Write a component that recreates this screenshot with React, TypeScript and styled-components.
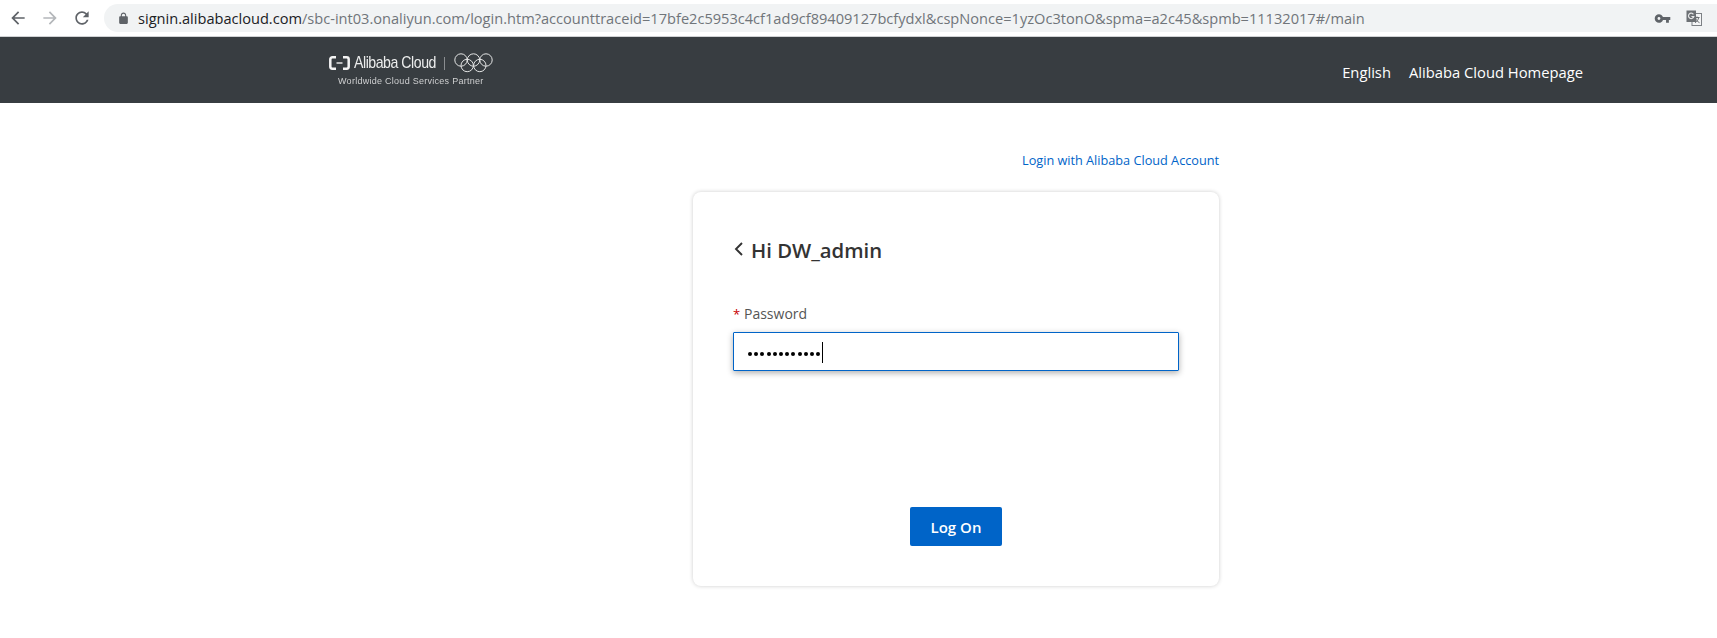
import React from "react";
import styled, { createGlobalStyle } from "styled-components";

const Global = createGlobalStyle`
  html, body { margin: 0; padding: 0; background: #fff; }
  body { font-family: "Open Sans", "Noto Sans", sans-serif; overflow: hidden; }
`;

const Page = styled.div`
  width: 1717px;
  height: 638px;
  display: flex;
  flex-direction: column;
`;

/* Browser chrome */
const BrowserBar = styled.div`
  height: 36px;
  border-bottom: 1px solid #d0d2d4;
  box-sizing: content-box;
  display: flex;
  align-items: flex-start;
  padding-top: 0;
  background: #fff;
`;
const NavButtons = styled.div`
  width: 104px;
  height: 36px;
  flex: none;
  display: flex;
  align-items: center;
  gap: 12px;
  padding-left: 8px;
  box-sizing: border-box;
`;
const NavIcon = styled.svg<{ $off?: boolean }>`
  width: 20px;
  height: 20px;
  fill: ${(p) => (p.$off ? "#b4b7ba" : "#5f6368")};
  flex: none;
`;
const UrlPill = styled.div`
  flex: 1;
  height: 28px;
  margin-top: 4px;
  background: #f1f3f4;
  border-radius: 14px 0 0 14px;
  display: flex;
  align-items: center;
  padding-left: 13px;
  box-sizing: border-box;
`;
const LockIcon = styled.svg`
  width: 13px;
  height: 13px;
  fill: #5f6368;
  flex: none;
  margin-right: 8px;
`;
const UrlText = styled.div`
  font-family: "Open Sans", sans-serif;
  font-size: 14.6px;
  color: #70757a;
  white-space: nowrap;
  flex: 1;
  strong { font-weight: 400; color: #202124; }
`;
const PillIcons = styled.div`
  display: flex;
  align-items: center;
  gap: 15px;
  padding-right: 15px;
`;
const KeyIcon = styled.svg`
  width: 17px;
  height: 17px;
  fill: #5f6368;
`;
const TranslateIcon = styled.svg`
  width: 16px;
  height: 16px;
`;

/* Site header */
const SiteHeader = styled.header`
  height: 66px;
  background: #383d41;
  display: flex;
  align-items: center;
  justify-content: space-between;
  padding: 0 134px 0 329px;
  flex: none;
`;
const Brand = styled.div`
  display: flex;
  flex-direction: column;
  align-items: flex-start;
  margin-top: -1px;
`;
const BrandRow = styled.div`
  display: flex;
  align-items: center;
  color: #eceded;
`;
const BrandName = styled.span`
  font-family: "Liberation Sans", sans-serif;
  font-size: 17px;
  letter-spacing: -0.55px;
  margin-left: 4px;
  white-space: nowrap;
  transform: scaleX(0.83);
  transform-origin: left center;
  width: 90px;
  filter: blur(0.3px);
`;
const BrandBar = styled.span`
  width: 1px;
  height: 13px;
  background: #8a8d90;
  margin: 0 9px 0 0;
`;
const BrandTag = styled.span`
  font-family: "Liberation Sans", sans-serif;
  font-size: 9px;
  letter-spacing: 0.27px;
  color: #cfd0d1;
  margin: 3px 0 0 9px;
  white-space: nowrap;
  filter: blur(0.25px);
`;
const HeaderNav = styled.nav`
  display: flex;
  gap: 18px;
  margin-top: 3px;
`;
const HeaderLink = styled.a`
  font-size: 14.75px;
  color: #fff;
  white-space: nowrap;
`;

/* Login */
const Main = styled.main`
  width: 526px;
  margin-left: 693px;
  padding-top: 47px;
  display: flex;
  flex-direction: column;
`;
const AccountLink = styled.a`
  align-self: flex-end;
  font-size: 12.7px;
  line-height: 20px;
  color: #0064c8;
  white-space: nowrap;
`;
const Card = styled.section`
  margin-top: 22px;
  height: 394px;
  box-sizing: border-box;
  background: #fff;
  border-radius: 8px;
  box-shadow: 0 0 4px rgba(0, 0, 0, 0.2);
  padding: 43px 40px 40px;
  display: flex;
  flex-direction: column;
`;
const Title = styled.h1`
  margin: 0;
  display: flex;
  align-items: center;
  font-size: 20.3px;
  line-height: 30px;
  font-weight: 600;
  color: #333;
  gap: 7px;
`;
const BackIcon = styled.svg`
  width: 10px;
  height: 14px;
  margin-left: 1px;
  fill: none;
  stroke: #333;
  stroke-width: 1.9;
  margin-top: -2px;
`;
const FieldLabel = styled.label`
  margin-top: 39px;
  font-size: 14px;
  line-height: 20px;
  color: #555;
  display: flex;
  gap: 3px;
`;
const Required = styled.span`
  color: #c80000;
  width: 8px;
  font-size: 13px;
`;
const PasswordBox = styled.div`
  margin-top: 8px;
  width: 446px;
  height: 39px;
  box-sizing: border-box;
  border: 1px solid #0064c8;
  border-radius: 1px;
  box-shadow: 0 2px 6px rgba(0, 0, 0, 0.32);
  display: flex;
  align-items: center;
  padding-left: 14px;
`;
const Dots = styled.span`
  display: flex;
  gap: 2.2px;
  margin-top: 4px;
`;
const Dot = styled.i`
  width: 4px;
  height: 4px;
  border-radius: 50%;
  background: #000;
`;
const Caret = styled.span`
  width: 1px;
  height: 21px;
  background: #000;
  margin-left: 2px;
  margin-top: 1px;
`;
const Actions = styled.div`
  margin-top: auto;
  display: flex;
  justify-content: center;
`;
const LogOn = styled.button`
  width: 92px;
  height: 39px;
  border: none;
  border-radius: 2px;
  background: #0064c8;
  color: #fff;
  font-family: inherit;
  font-size: 15px;
  font-weight: 600;
  padding: 1px 0 0;
`;

export default function App() {
  return (
    <Page>
      <Global />
      <BrowserBar>
        <NavButtons>
          <NavIcon viewBox="0 0 24 24"><path d="M20 11H7.83l5.59-5.59L12 4l-8 8 8 8 1.41-1.41L7.83 13H20v-2z" /></NavIcon>
          <NavIcon $off viewBox="0 0 24 24"><path d="M4 11h12.17l-5.59-5.59L12 4l8 8-8 8-1.41-1.41L16.17 13H4v-2z" /></NavIcon>
          <NavIcon viewBox="0 0 24 24"><path d="M17.65 6.35C16.2 4.9 14.21 4 12 4c-4.42 0-7.99 3.58-7.99 8s3.57 8 7.99 8c3.73 0 6.84-2.55 7.73-6h-2.08c-.82 2.33-3.04 4-5.65 4-3.31 0-6-2.69-6-6s2.69-6 6-6c1.66 0 3.14.69 4.22 1.78L13 11h7V4l-2.35 2.35z" /></NavIcon>
        </NavButtons>
        <UrlPill>
          <LockIcon viewBox="0 0 24 24"><path d="M18 8h-1V6c0-2.76-2.24-5-5-5S7 3.24 7 6v2H6c-1.1 0-2 .9-2 2v10c0 1.1.9 2 2 2h12c1.1 0 2-.9 2-2V10c0-1.1-.9-2-2-2zM9 6c0-1.66 1.34-3 3-3s3 1.34 3 3v2H9V6z" /></LockIcon>
          <UrlText><strong>signin.alibabacloud.com</strong>/sbc-int03.onaliyun.com/login.htm?accounttraceid=17bfe2c5953c4cf1ad9cf89409127bcfydxl&amp;cspNonce=1yzOc3tonO&amp;spma=a2c45&amp;spmb=11132017#/main</UrlText>
          <PillIcons>
            <KeyIcon viewBox="0 0 24 24"><path d="M12.65 10C11.83 7.67 9.61 6 7 6c-3.31 0-6 2.69-6 6s2.69 6 6 6c2.61 0 4.83-1.67 5.65-4H17v4h4v-4h2v-4H12.65zM7 14c-1.1 0-2-.9-2-2s.9-2 2-2 2 .9 2 2-.9 2-2 2z" /></KeyIcon>
            <TranslateIcon viewBox="0 0 16 16">
              <rect x="6" y="3.5" width="9.5" height="12" fill="#f4f5f6" stroke="#7d8185" />
              <path d="M8.5 7.5h5M11 6.5v1M9.5 7.5c.6 2.5 2 4.4 4 5.2M12.7 7.5c-.5 2.5-1.8 4.3-3.7 5.2" fill="none" stroke="#6a6e72" strokeWidth="1" />
              <rect x="0.5" y="0.5" width="9.5" height="11.5" fill="#6c7074" />
              <path d="M7.4 4.3A2.7 2.7 0 1 0 7.8 6.5H5.4" fill="none" stroke="#e6e7e8" strokeWidth="1.2" />
            </TranslateIcon>
          </PillIcons>
        </UrlPill>
      </BrowserBar>
      <SiteHeader>
        <Brand>
          <BrandRow>
            <svg width="21" height="14" viewBox="0 0 21 14" fill="none" stroke="#f4f4f4" strokeWidth="2.5">
              <path d="M7 1.3H3.4a2.1 2.1 0 0 0-2.1 2.1v7.2a2.1 2.1 0 0 0 2.1 2.1H7" />
              <path d="M14 1.3h3.6a2.1 2.1 0 0 1 2.1 2.1v7.2a2.1 2.1 0 0 1-2.1 2.1H14" />
              <path d="M7.5 7h6" strokeWidth="1.4" />
            </svg>
            <BrandName>Alibaba Cloud</BrandName>
            <BrandBar />
            <svg width="39" height="20" viewBox="0 0 39 20" fill="none" stroke="#e4e5e5" strokeWidth="1">
              <circle cx="7" cy="7" r="6.2" />
              <circle cx="19.5" cy="7" r="6.2" />
              <circle cx="32" cy="7" r="6.2" />
              <circle cx="13.2" cy="12.5" r="6.2" />
              <circle cx="25.8" cy="12.5" r="6.2" />
            </svg>
          </BrandRow>
          <BrandTag>Worldwide Cloud Services Partner</BrandTag>
        </Brand>
        <HeaderNav>
          <HeaderLink>English</HeaderLink>
          <HeaderLink>Alibaba Cloud Homepage</HeaderLink>
        </HeaderNav>
      </SiteHeader>
      <Main>
        <AccountLink>Login with Alibaba Cloud Account</AccountLink>
        <Card>
          <Title>
            <BackIcon viewBox="0 0 10 14"><path d="M8 1 2 7l6 6" /></BackIcon>
            Hi DW_admin
          </Title>
          <FieldLabel><Required>*</Required>Password</FieldLabel>
          <PasswordBox>
            <Dots>{Array.from({ length: 12 }, (_, i) => <Dot key={i} />)}</Dots>
            <Caret />
          </PasswordBox>
          <Actions><LogOn>Log On</LogOn></Actions>
        </Card>
      </Main>
    </Page>
  );
}
